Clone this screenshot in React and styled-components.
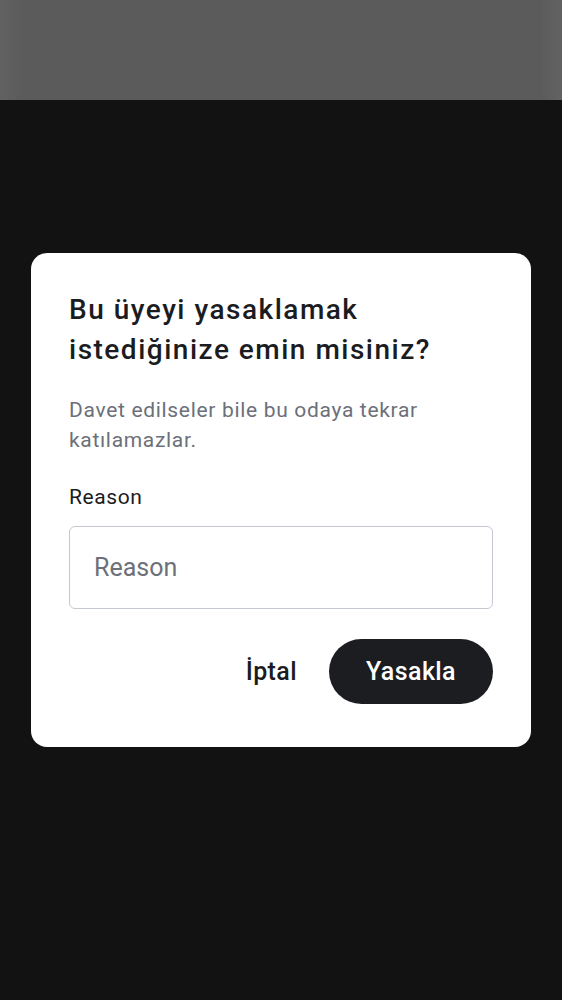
import React, { useState } from 'react';
import styled, { createGlobalStyle } from 'styled-components';

const GlobalStyle = createGlobalStyle`
  html, body {
    margin: 0;
    padding: 0;
    background: #121212;
  }
  body {
    font-family: Roboto, "Noto Sans", "Liberation Sans", sans-serif;
  }
  * {
    box-sizing: border-box;
  }
`;

const Page = styled.div`
  display: flex;
  flex-direction: column;
  height: 1000px;
  background: #121212;
`;

const TopBar = styled.div`
  height: 100px;
  flex-shrink: 0;
  background: linear-gradient(90deg, #626262 0%, #5b5b5b 4%, #5b5b5b 96%, #626262 100%);
`;

const Overlay = styled.div`
  flex: 1;
  display: flex;
  align-items: center;
  justify-content: center;
  padding: 0 31px 100px;
`;

const Dialog = styled.div`
  width: 100%;
  background: #ffffff;
  border-radius: 16px;
  padding: 37px 38px 43px;
  display: flex;
  flex-direction: column;
`;

const Title = styled.h2`
  margin: 0;
  font-size: 28px;
  line-height: 40px;
  font-weight: 500;
  letter-spacing: 1.5px;
  color: #1b1c1f;
`;

const Description = styled.p`
  margin: 25px 0 0;
  font-size: 21px;
  line-height: 30px;
  color: #6b7079;
  letter-spacing: 0.68px;
`;

const Label = styled.label`
  margin-top: 27px;
  font-size: 21px;
  line-height: 30px;
  color: #1b1c1f;
  letter-spacing: 0.6px;
`;

const Input = styled.input`
  margin-top: 14px;
  height: 83px;
  width: 100%;
  border: 1px solid #c4c8d0;
  border-radius: 6px;
  padding: 0 24px;
  font-family: inherit;
  font-size: 25px;
  color: #1b1c1f;
  outline: none;
  &::placeholder {
    color: #6b7079;
  }
`;

const Actions = styled.div`
  margin-top: 30px;
  display: flex;
  justify-content: flex-end;
  align-items: center;
  gap: 32px;
`;

const Button = styled.button`
  height: 65px;
  border: none;
  border-radius: 33px;
  font-family: inherit;
  font-size: 25px;
  font-weight: 500;
  letter-spacing: 0.4px;
  cursor: pointer;
  background: ${(p) => (p.$primary ? '#1c1d21' : 'transparent')};
  color: ${(p) => (p.$primary ? '#ffffff' : '#1b1c1f')};
  padding: 0;
  width: ${(p) => (p.$primary ? '164px' : 'auto')};
`;

const App = () => {
  const [reason, setReason] = useState('');

  return (
    <>
      <GlobalStyle />
      <Page>
        <TopBar />
        <Overlay>
          <Dialog>
            <Title>Bu üyeyi yasaklamak istediğinize emin misiniz?</Title>
            <Description>
              Davet edilseler bile bu odaya tekrar katılamazlar.
            </Description>
            <Label htmlFor='reason'>Reason</Label>
            <Input
              id='reason'
              placeholder='Reason'
              value={reason}
              onChange={(e) => setReason(e.target.value)}
            />
            <Actions>
              <Button>İptal</Button>
              <Button $primary>Yasakla</Button>
            </Actions>
          </Dialog>
        </Overlay>
      </Page>
    </>
  );
};

export default App;
